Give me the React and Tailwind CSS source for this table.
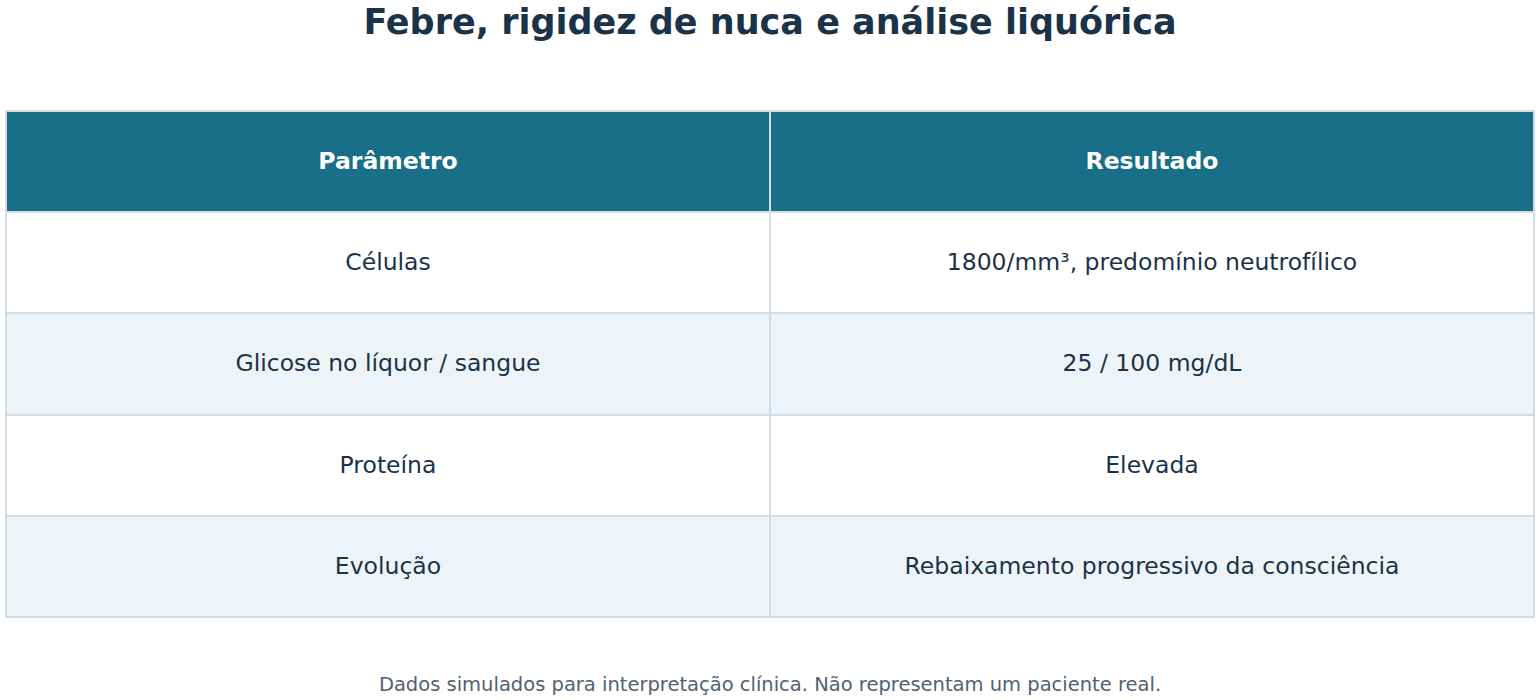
import React from "react";

const rows = [
  ["Células", "1800/mm³, predomínio neutrofílico"],
  ["Glicose no líquor / sangue", "25 / 100 mg/dL"],
  ["Proteína", "Elevada"],
  ["Evolução", "Rebaixamento progressivo da consciência"],
];

export default function App() {
  return (
    <div className="w-[1540px] h-[700px] bg-white overflow-hidden font-['DejaVu_Sans',sans-serif] text-[#1a3349]">
      <h1 className="text-center text-[35px] font-bold leading-[44px] mt-0">
        Febre, rigidez de nuca e análise liquórica
      </h1>
      <div className="px-[5px] mt-[66px]">
        <table className="w-full border-collapse table-fixed text-[23.5px]">
          <thead>
            <tr className="bg-[#196e88] text-white h-[101px]">
              <th className="border-2 border-[#d0dde6] font-bold">Parâmetro</th>
              <th className="border-2 border-[#d0dde6] font-bold">Resultado</th>
            </tr>
          </thead>
          <tbody>
            {rows.map(([param, result], i) => (
              <tr key={i} className={`h-[101.3px] ${i % 2 === 1 ? "bg-[#eef3f7]" : "bg-white"}`}>
                <td className="border-2 border-[#d0dde6] text-center">{param}</td>
                <td className="border-2 border-[#d0dde6] text-center">{result}</td>
              </tr>
            ))}
          </tbody>
        </table>
      </div>
      <p className="text-center text-[19.5px] text-[#4f6272] mt-[52px]">
        Dados simulados para interpretação clínica. Não representam um paciente real.
      </p>
    </div>
  );
}
